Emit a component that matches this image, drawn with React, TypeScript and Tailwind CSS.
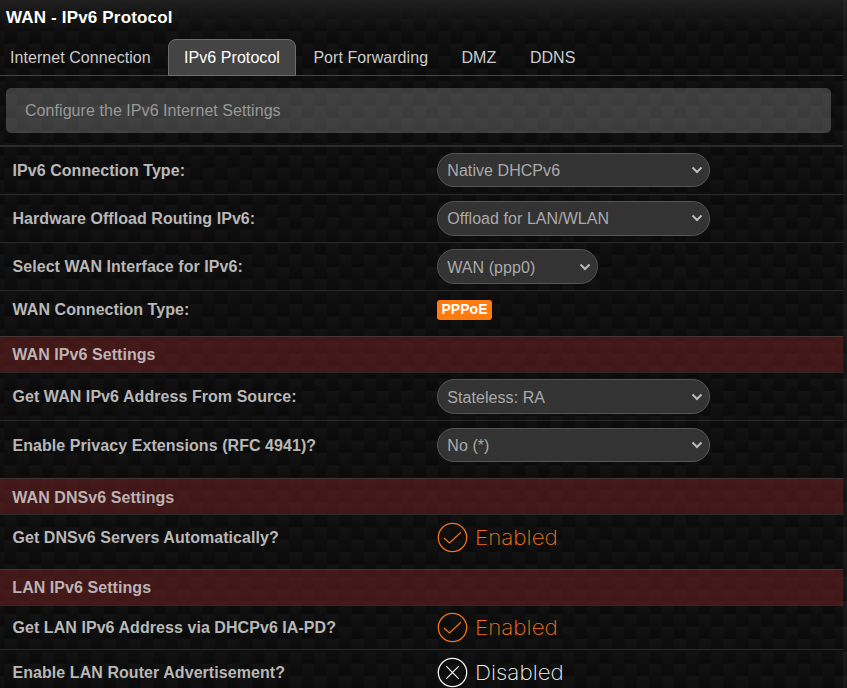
import React from "react";

const tabs = [
  { label: "Port Forwarding", width: "w-[148px]" },
  { label: "DMZ", width: "w-[68.5px]" },
  { label: "DDNS", width: "w-[80px]" },
];

function CarbonBackground() {
  return (
    <svg className="absolute inset-0 -z-10 h-full w-full" aria-hidden="true">
      <defs>
        <linearGradient id="weave" x1="0" y1="0" x2="0" y2="1">
          <stop offset="0" stopColor="#131313" />
          <stop offset="0.5" stopColor="#0e0e0e" />
          <stop offset="1" stopColor="#0a0a0a" />
        </linearGradient>
        <linearGradient id="glow" x1="0" y1="0" x2="0" y2="1">
          <stop offset="0" stopColor="#1f1f1f" stopOpacity="1" />
          <stop offset="1" stopColor="#141414" stopOpacity="0" />
        </linearGradient>
        <pattern id="carbon" width="24.8" height="24.8" patternUnits="userSpaceOnUse" patternTransform="translate(4.4 18.9)">
          <rect width="12.4" height="24.8" fill="url(#weave)" />
          <rect x="12.4" y="-12.4" width="12.4" height="24.8" fill="url(#weave)" />
          <rect x="12.4" y="12.4" width="12.4" height="24.8" fill="url(#weave)" />
        </pattern>
      </defs>
      <rect width="100%" height="100%" fill="url(#carbon)" />
      <rect width="100%" height="36" fill="url(#glow)" />
      <rect x="843" width="4" height="100%" fill="#ffffff" fillOpacity="0.04" />
    </svg>
  );
}

function Select({ value, box }: { value: string; box: string }) {
  return (
    <div className={`flex items-center justify-between rounded-full border border-[#555] bg-[#333] pr-[6px] pl-[9.3px] text-[#aaa] ${box}`}>
      <span>{value}</span>
      <svg width="12" height="10" viewBox="0 0 12 10" fill="none" className="-mt-[2px]">
        <path d="M1.5 2.5 6 7 10.5 2.5" stroke="#bbb" strokeWidth="2" />
      </svg>
    </div>
  );
}

function Toggle({ on }: { on: boolean }) {
  return (
    <div className={`flex items-center ${on ? "text-[#f0731c]" : "text-[#f2f2f2]"}`}>
      <svg width="31" height="31" viewBox="0 0 31 31" fill="none" stroke="currentColor">
        <circle cx="15.5" cy="15.5" r="14.2" strokeWidth="1.3" />
        {on ? (
          <path d="m7 16 5.5 5L24 10.2" strokeWidth="1.2" />
        ) : (
          <path d="m9.2 9.2 12.6 12.6m0-12.6L9.2 21.8" strokeWidth="1.2" />
        )}
      </svg>
      <span className="ml-[7px] origin-left scale-x-[1.09] pt-px font-['Inter',sans-serif] text-[20.5px] leading-[30px] font-extralight tracking-[0.02px]">
        {on ? "Enabled" : "Disabled"}
      </span>
    </div>
  );
}

function Row({ label, h, pad, labelPad, children }: { label: string; h: string; pad: string; labelPad: string; children: React.ReactNode }) {
  return (
    <div className={`flex items-start border-t border-[#2a2a2a] pl-[12.5px] ${h}`}>
      <div className={`w-[424.5px] shrink-0 font-bold text-[#b8b8b8] ${labelPad}`}>{label}</div>
      <div className={pad}>{children}</div>
    </div>
  );
}

function Section({ title, pad }: { title: string; pad: string }) {
  return (
    <div className={`h-9 border-t border-[#453535] bg-[#762222]/50 pl-[12.3px] font-bold text-[#bdb3b3] ${pad}`}>
      {title}
    </div>
  );
}

export default function App() {
  return (
    <div className="relative isolate h-[688px] w-[847px] overflow-hidden bg-[#0e0e0e] pr-1 font-['Liberation_Sans',Arial,sans-serif] text-[16px] leading-5 tracking-[0.06px]">
      <CarbonBackground />
      <h1 className="h-[39px] pt-[8px] pl-[6px] text-[17px] font-bold tracking-[0.17px] text-white">WAN - IPv6 Protocol</h1>
      <nav className="flex h-[37px] items-stretch border-b border-[#444] text-[#ccc]">
        <span className="w-[168px] pt-[9px] pl-[10px] whitespace-nowrap">Internet Connection</span>
        <span className="-mb-px h-[37px] w-[128px] rounded-t-[8px] border border-[#6e6e6e] bg-[#444] pt-[8px] text-center text-white">
          IPv6 Protocol
        </span>
        {tabs.map((t) => (
          <span key={t.label} className={`pt-[9px] pl-[17.4px] ${t.width}`}>{t.label}</span>
        ))}
      </nav>
      <div className="mt-3 mr-3 ml-[6px] h-[45px] rounded-[5px] bg-white/20 pt-[13px] pl-[19px] text-[#999]">
        Configure the IPv6 Internet Settings
      </div>
      <div className="mt-3 border-t border-[#2a2a2a]">
        <Row label="IPv6 Connection Type:" h="h-12" labelPad="pt-[14px]" pad="pt-[6px]">
          <Select value="Native DHCPv6" box="h-[34px] w-[273px] pt-[2px]" />
        </Row>
        <Row label="Hardware Offload Routing IPv6:" h="h-12" labelPad="pt-[14px]" pad="pt-[6px]">
          <Select value="Offload for LAN/WLAN" box="h-[35px] w-[273px]" />
        </Row>
        <Row label="Select WAN Interface for IPv6:" h="h-12" labelPad="pt-[14px]" pad="pt-[6px]">
          <Select value="WAN (ppp0)" box="h-[35px] w-[161px] pt-[2px]" />
        </Row>
        <Row label="WAN Connection Type:" h="h-[46px]" labelPad="pt-[9px]" pad="pt-[9px]">
          <div className="h-5 w-[55px] rounded-[3px] bg-[#ff7b0d] text-center text-[14px] leading-[19px] font-bold text-white">PPPoE</div>
        </Row>
        <Section title="WAN IPv6 Settings" pad="pt-[8px]" />
        <Row label="Get WAN IPv6 Address From Source:" h="h-12" labelPad="pt-[14px]" pad="pt-[6px]">
          <Select value="Stateless: RA" box="h-[35px] w-[273px] pt-[2px]" />
        </Row>
        <Row label="Enable Privacy Extensions (RFC 4941)?" h="h-[58px]" labelPad="pt-[15px]" pad="pt-[7px]">
          <Select value="No (*)" box="h-[34px] w-[273px] pt-[2px]" />
        </Row>
        <Section title="WAN DNSv6 Settings" pad="pt-[9px]" />
        <Row label="Get DNSv6 Servers Automatically?" h="h-[55px]" labelPad="pt-[13px]" pad="pt-[7px]">
          <Toggle on />
        </Row>
        <Section title="LAN IPv6 Settings" pad="pt-[8px]" />
        <Row label="Get LAN IPv6 Address via DHCPv6 IA-PD?" h="h-11" labelPad="pt-[12px]" pad="pt-[6px]">
          <Toggle on />
        </Row>
        <Row label="Enable LAN Router Advertisement?" h="h-12" labelPad="pt-[13px]" pad="pt-[7px]">
          <Toggle on={false} />
        </Row>
      </div>
    </div>
  );
}
